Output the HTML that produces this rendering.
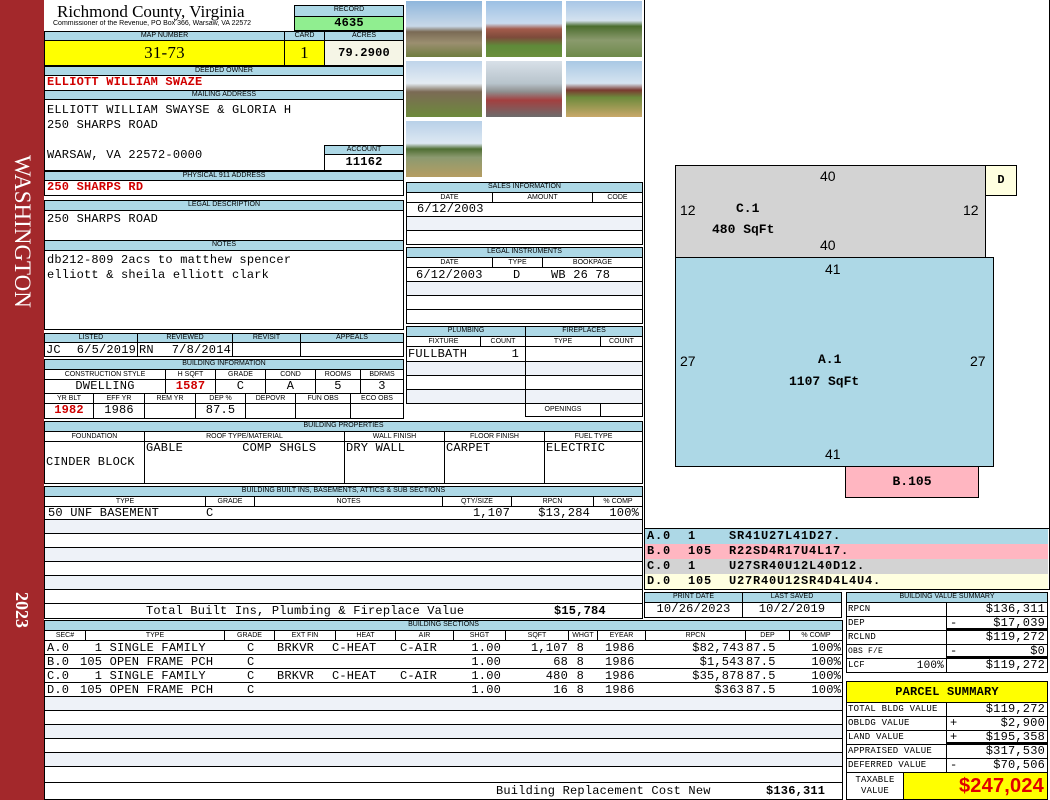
<!DOCTYPE html>
<html><head><meta charset="utf-8"><style>
*{margin:0;padding:0;box-sizing:border-box}
body{width:1050px;height:800px;position:relative;background:#fff;overflow:hidden;font-family:"Liberation Mono",monospace;font-size:12px;color:#000}
.a{position:absolute;overflow:hidden;white-space:nowrap}
.h{position:absolute;background:#add8e6;border:1px solid #000;font:7px/8px "Liberation Sans",sans-serif;text-align:center;overflow:hidden;white-space:nowrap}
.c{position:absolute;border:1px solid #000;font:7px/9px "Liberation Sans",sans-serif;text-align:center;background:#fff;overflow:hidden;white-space:nowrap}
.b{position:absolute;border:1px solid #000;background:#fff;overflow:hidden;white-space:nowrap;font-size:12px;letter-spacing:.2px;line-height:13px}
.t{position:absolute;font-size:12px;letter-spacing:.2px;line-height:14px;white-space:pre}
.R{text-align:right}
.r{color:#d00000;font-weight:bold}
.alt{background:#eef2f8}
.ph{position:absolute;width:78px;height:58px;border:1px solid #fff}
.k{position:absolute;font:bold 12px/15px "Liberation Mono",monospace;letter-spacing:.8px;white-space:pre}
</style></head><body>
<div class="a" style="left:0;top:0;width:44px;height:800px;background:#a3282b"></div>
<div class="a" style="left:6px;top:155px;width:32px;height:175px;color:#fff;font:23px 'Liberation Serif',serif;writing-mode:vertical-rl;line-height:32px">WASHINGTON</div>
<div class="a" style="left:8px;top:592px;width:28px;height:40px;color:#fff;font:bold 18px 'Liberation Serif',serif;writing-mode:vertical-rl;line-height:28px">2023</div>

<div class="a" style="left:57px;top:2px;font:17px/19px 'Liberation Serif',serif">Richmond County, Virginia</div>
<div class="a" style="left:53px;top:20px;font:7px/8px 'Liberation Sans',sans-serif">Commissioner of the Revenue, PO Box 366, Warsaw, VA 22572</div>
<div class="h" style="left:294px;top:5px;width:110px;height:12px">RECORD</div>
<div class="b" style="left:294px;top:16px;width:110px;height:15px;background:#90ee90;text-align:center;font-weight:bold;line-height:13px">4635</div>

<div class="h" style="left:44px;top:31px;width:241px;height:10px">MAP NUMBER</div>
<div class="h" style="left:284px;top:31px;width:41px;height:10px">CARD</div>
<div class="h" style="left:324px;top:31px;width:80px;height:10px">ACRES</div>
<div class="b" style="left:44px;top:40px;width:241px;height:26px;background:#ffff00;text-align:center;font:17px/24px 'Liberation Serif',serif">31-73</div>
<div class="b" style="left:284px;top:40px;width:41px;height:26px;background:#ffff00;text-align:center;font:17px/24px 'Liberation Serif',serif">1</div>
<div class="b" style="left:324px;top:40px;width:80px;height:26px;background:#f5f5e6;text-align:center;font-weight:bold;line-height:24px">79.2900</div>

<div class="h" style="left:44px;top:66px;width:360px;height:10px">DEEDED OWNER</div>
<div class="b r" style="left:44px;top:75px;width:360px;height:16px;padding-left:2px">ELLIOTT WILLIAM SWAZE</div>
<div class="h" style="left:44px;top:90px;width:360px;height:10px">MAILING ADDRESS</div>
<div class="b" style="left:44px;top:99px;width:360px;height:72px;padding:3px 2px;line-height:15px;white-space:pre">ELLIOTT WILLIAM SWAYSE &amp; GLORIA H
250 SHARPS ROAD

WARSAW, VA 22572-0000</div>
<div class="h" style="left:324px;top:145px;width:80px;height:10px">ACCOUNT</div>
<div class="b" style="left:324px;top:154px;width:80px;height:17px;text-align:center;font-weight:bold;line-height:15px">11162</div>
<div class="h" style="left:44px;top:171px;width:360px;height:10px">PHYSICAL 911 ADDRESS</div>
<div class="b r" style="left:44px;top:180px;width:360px;height:16px;padding-left:2px">250 SHARPS RD</div>

<div class="h" style="left:44px;top:200px;width:360px;height:11px">LEGAL DESCRIPTION</div>
<div class="b" style="left:44px;top:210px;width:360px;height:31px;padding:2px">250 SHARPS ROAD</div>
<div class="h" style="left:44px;top:240px;width:360px;height:11px">NOTES</div>
<div class="b" style="left:44px;top:250px;width:360px;height:80px;padding:2px;line-height:15px;white-space:pre">db212-809 2acs to matthew spencer
elliott &amp; sheila elliott clark</div>

<div class="h" style="left:44px;top:333px;width:94px;height:10px">LISTED</div>
<div class="h" style="left:137px;top:333px;width:96px;height:10px">REVIEWED</div>
<div class="h" style="left:232px;top:333px;width:69px;height:10px">REVISIT</div>
<div class="h" style="left:300px;top:333px;width:104px;height:10px">APPEALS</div>
<div class="b" style="left:44px;top:342px;width:94px;height:15px"></div>
<div class="b" style="left:137px;top:342px;width:96px;height:15px"></div>
<div class="b" style="left:232px;top:342px;width:69px;height:15px"></div>
<div class="b" style="left:300px;top:342px;width:104px;height:15px"></div>
<div class="t" style="left:46px;top:343px">JC</div>
<div class="t R" style="left:60px;top:343px;width:76px">6/5/2019</div>
<div class="t" style="left:139px;top:343px">RN</div>
<div class="t R" style="left:150px;top:343px;width:81px">7/8/2014</div>

<div class="h" style="left:44px;top:359px;width:360px;height:11px">BUILDING INFORMATION</div>
<div class="c" style="left:44px;top:369px;width:122px;height:11px">CONSTRUCTION STYLE</div>
<div class="c" style="left:165px;top:369px;width:51px;height:11px">H SQFT</div>
<div class="c" style="left:215px;top:369px;width:51px;height:11px">GRADE</div>
<div class="c" style="left:265px;top:369px;width:51px;height:11px">COND</div>
<div class="c" style="left:315px;top:369px;width:46px;height:11px">ROOMS</div>
<div class="c" style="left:360px;top:369px;width:44px;height:11px">BDRMS</div>
<div class="b" style="left:44px;top:379px;width:122px;height:15px;text-align:center">DWELLING</div>
<div class="b r" style="left:165px;top:379px;width:51px;height:15px;text-align:center">1587</div>
<div class="b" style="left:215px;top:379px;width:51px;height:15px;text-align:center">C</div>
<div class="b" style="left:265px;top:379px;width:51px;height:15px;text-align:center">A</div>
<div class="b" style="left:315px;top:379px;width:46px;height:15px;text-align:center">5</div>
<div class="b" style="left:360px;top:379px;width:44px;height:15px;text-align:center">3</div>
<div class="c" style="left:44px;top:393px;width:50px;height:11px">YR BLT</div>
<div class="c" style="left:93px;top:393px;width:52px;height:11px">EFF YR</div>
<div class="c" style="left:144px;top:393px;width:52px;height:11px">REM YR</div>
<div class="c" style="left:195px;top:393px;width:51px;height:11px">DEP %</div>
<div class="c" style="left:245px;top:393px;width:51px;height:11px">DEPOVR</div>
<div class="c" style="left:295px;top:393px;width:56px;height:11px">FUN OBS</div>
<div class="c" style="left:350px;top:393px;width:54px;height:11px">ECO OBS</div>
<div class="b r" style="left:44px;top:403px;width:50px;height:16px;text-align:center">1982</div>
<div class="b" style="left:93px;top:403px;width:52px;height:16px;text-align:center">1986</div>
<div class="b" style="left:144px;top:403px;width:52px;height:16px"></div>
<div class="b" style="left:195px;top:403px;width:51px;height:16px;text-align:center">87.5</div>
<div class="b" style="left:245px;top:403px;width:51px;height:16px"></div>
<div class="b" style="left:295px;top:403px;width:56px;height:16px"></div>
<div class="b" style="left:350px;top:403px;width:54px;height:16px"></div>

<div class="ph" style="left:405px;top:0;background:linear-gradient(#8fb6dc 0,#c8d8e8 45%,#7a6a55 55%,#9b8f70 75%,#6f7d3f 100%)"></div>
<div class="ph" style="left:485px;top:0;background:linear-gradient(#9cc0e4 0,#c9dbee 40%,#a35b4b 50%,#7d4b3b 65%,#5f8a3a 80%,#6b8f3c 100%)"></div>
<div class="ph" style="left:565px;top:0;background:linear-gradient(#a8c6e6 0,#d4e2ef 35%,#4b6d2e 45%,#8a9a6d 70%,#6e8a4a 100%)"></div>
<div class="ph" style="left:405px;top:60px;background:linear-gradient(#bfd4ea 0,#e4ecf3 40%,#7b6a55 55%,#6d8a3c 100%)"></div>
<div class="ph" style="left:485px;top:60px;background:linear-gradient(#d8e0e8 0,#b8c4cc 40%,#8f8f8f 55%,#a34040 70%,#6c6c6c 100%)"></div>
<div class="ph" style="left:565px;top:60px;background:linear-gradient(#a9c8e4 0,#d6e4f0 40%,#7a3a30 52%,#6d8a3c 65%,#c9a86a 100%)"></div>
<div class="ph" style="left:405px;top:120px;background:linear-gradient(#b8d0e8 0,#dde8f2 40%,#4f6e33 50%,#8c9a70 65%,#b59d62 100%)"></div>

<div class="h" style="left:406px;top:182px;width:237px;height:11px">SALES INFORMATION</div>
<div class="c" style="left:406px;top:192px;width:87px;height:11px">DATE</div>
<div class="c" style="left:492px;top:192px;width:101px;height:11px">AMOUNT</div>
<div class="c" style="left:592px;top:192px;width:51px;height:11px">CODE</div>
<div class="b" style="left:406px;top:202px;width:237px;height:15px;padding-left:10px">6/12/2003</div>
<div class="b alt" style="left:406px;top:216px;width:237px;height:15px"></div>
<div class="b" style="left:406px;top:230px;width:237px;height:15px"></div>

<div class="h" style="left:406px;top:247px;width:237px;height:11px">LEGAL INSTRUMENTS</div>
<div class="c" style="left:406px;top:257px;width:87px;height:11px">DATE</div>
<div class="c" style="left:492px;top:257px;width:51px;height:11px">TYPE</div>
<div class="c" style="left:542px;top:257px;width:101px;height:11px">BOOKPAGE</div>
<div class="b" style="left:406px;top:267px;width:237px;height:15px"></div>
<div class="t" style="left:416px;top:268px">6/12/2003</div>
<div class="t" style="left:513px;top:268px">D</div>
<div class="t" style="left:551px;top:268px">WB 26 78</div>
<div class="b alt" style="left:406px;top:281px;width:237px;height:15px"></div>
<div class="b" style="left:406px;top:295px;width:237px;height:15px"></div>
<div class="b" style="left:406px;top:309px;width:237px;height:15px"></div>

<div class="h" style="left:406px;top:326px;width:120px;height:11px">PLUMBING</div>
<div class="h" style="left:525px;top:326px;width:118px;height:11px">FIREPLACES</div>
<div class="c" style="left:406px;top:336px;width:75px;height:11px">FIXTURE</div>
<div class="c" style="left:480px;top:336px;width:46px;height:11px">COUNT</div>
<div class="c" style="left:525px;top:336px;width:76px;height:11px">TYPE</div>
<div class="c" style="left:600px;top:336px;width:43px;height:11px">COUNT</div>
<div class="b" style="left:406px;top:346px;width:120px;height:16px"></div>
<div class="t" style="left:408px;top:347px">FULLBATH</div>
<div class="t R" style="left:480px;top:347px;width:39px">1</div>
<div class="b alt" style="left:406px;top:361px;width:120px;height:15px"></div>
<div class="b" style="left:406px;top:375px;width:120px;height:15px"></div>
<div class="b alt" style="left:406px;top:389px;width:120px;height:15px"></div>
<div class="b" style="left:525px;top:346px;width:118px;height:16px"></div>
<div class="b alt" style="left:525px;top:361px;width:118px;height:15px"></div>
<div class="b" style="left:525px;top:375px;width:118px;height:15px"></div>
<div class="b alt" style="left:525px;top:389px;width:118px;height:15px"></div>
<div class="c" style="left:525px;top:403px;width:76px;height:14px;line-height:12px">OPENINGS</div>
<div class="b" style="left:600px;top:403px;width:43px;height:14px"></div>

<div class="h" style="left:44px;top:421px;width:599px;height:11px">BUILDING PROPERTIES</div>
<div class="c" style="left:44px;top:431px;width:101px;height:11px">FOUNDATION</div>
<div class="c" style="left:144px;top:431px;width:201px;height:11px">ROOF TYPE/MATERIAL</div>
<div class="c" style="left:344px;top:431px;width:101px;height:11px">WALL FINISH</div>
<div class="c" style="left:444px;top:431px;width:101px;height:11px">FLOOR FINISH</div>
<div class="c" style="left:544px;top:431px;width:99px;height:11px">FUEL TYPE</div>
<div class="b" style="left:44px;top:441px;width:101px;height:43px;padding:14px 1px 0">CINDER BLOCK</div>
<div class="b" style="left:144px;top:441px;width:201px;height:43px;padding:0 1px;white-space:pre">GABLE        COMP SHGLS</div>
<div class="b" style="left:344px;top:441px;width:101px;height:43px;padding:0 1px">DRY WALL</div>
<div class="b" style="left:444px;top:441px;width:101px;height:43px;padding:0 1px">CARPET</div>
<div class="b" style="left:544px;top:441px;width:99px;height:43px;padding:0 1px">ELECTRIC</div>

<div class="h" style="left:44px;top:486px;width:599px;height:11px">BUILDING BUILT INS, BASEMENTS, ATTICS &amp; SUB SECTIONS</div>
<div class="c" style="left:44px;top:496px;width:162px;height:11px">TYPE</div>
<div class="c" style="left:205px;top:496px;width:50px;height:11px">GRADE</div>
<div class="c" style="left:254px;top:496px;width:189px;height:11px">NOTES</div>
<div class="c" style="left:442px;top:496px;width:70px;height:11px">QTY/SIZE</div>
<div class="c" style="left:511px;top:496px;width:83px;height:11px">RPCN</div>
<div class="c" style="left:593px;top:496px;width:50px;height:11px">% COMP</div>
<div class="b" style="left:44px;top:506px;width:599px;height:14px"></div>
<div class="t" style="left:48px;top:506px">50 UNF BASEMENT</div>
<div class="t" style="left:206px;top:506px">C</div>
<div class="t R" style="left:440px;top:506px;width:70px">1,107</div>
<div class="t R" style="left:510px;top:506px;width:80px">$13,284</div>
<div class="t R" style="left:590px;top:506px;width:49px">100%</div>
<div class="b alt" style="left:44px;top:519px;width:599px;height:15px"></div>
<div class="b" style="left:44px;top:533px;width:599px;height:15px"></div>
<div class="b alt" style="left:44px;top:547px;width:599px;height:15px"></div>
<div class="b" style="left:44px;top:561px;width:599px;height:15px"></div>
<div class="b alt" style="left:44px;top:575px;width:599px;height:15px"></div>
<div class="b" style="left:44px;top:589px;width:599px;height:15px"></div>
<div class="b" style="left:44px;top:603px;width:599px;height:16px"></div>
<div class="t" style="left:146px;top:604px">Total Built Ins, Plumbing &amp; Fireplace Value</div>
<div class="t" style="left:554px;top:604px;font-weight:bold">$15,784</div>

<div class="h" style="left:644px;top:592px;width:99px;height:11px">PRINT DATE</div>
<div class="h" style="left:742px;top:592px;width:100px;height:11px">LAST SAVED</div>
<div class="b" style="left:644px;top:602px;width:99px;height:16px;text-align:center">10/26/2023</div>
<div class="b" style="left:742px;top:602px;width:100px;height:16px;text-align:center">10/2/2019</div>

<div class="h" style="left:44px;top:620px;width:799px;height:11px">BUILDING SECTIONS</div>
<div class="c" style="left:44px;top:630px;width:42px;height:11px">SEC#</div>
<div class="c" style="left:85px;top:630px;width:140px;height:11px">TYPE</div>
<div class="c" style="left:224px;top:630px;width:51px;height:11px">GRADE</div>
<div class="c" style="left:274px;top:630px;width:62px;height:11px">EXT FIN</div>
<div class="c" style="left:335px;top:630px;width:61px;height:11px">HEAT</div>
<div class="c" style="left:395px;top:630px;width:59px;height:11px">AIR</div>
<div class="c" style="left:453px;top:630px;width:53px;height:11px">SHGT</div>
<div class="c" style="left:505px;top:630px;width:64px;height:11px">SQFT</div>
<div class="c" style="left:568px;top:630px;width:30px;height:11px">WHGT</div>
<div class="c" style="left:597px;top:630px;width:49px;height:11px">EYEAR</div>
<div class="c" style="left:645px;top:630px;width:101px;height:11px">RPCN</div>
<div class="c" style="left:745px;top:630px;width:45px;height:11px">DEP</div>
<div class="c" style="left:789px;top:630px;width:54px;height:11px">% COMP</div>
<div class="b" style="left:44px;top:640px;width:799px;height:15px"></div>
<div class="b" style="left:44px;top:654px;width:799px;height:15px"></div>
<div class="b" style="left:44px;top:668px;width:799px;height:15px"></div>
<div class="b" style="left:44px;top:682px;width:799px;height:15px"></div>

<div class="t" style="left:47px;top:641px">A.0</div><div class="t" style="left:80px;top:641px">  1 SINGLE FAMILY</div><div class="t" style="left:247px;top:641px">C</div><div class="t" style="left:277px;top:641px">BRKVR</div><div class="t" style="left:332px;top:641px">C-HEAT</div><div class="t" style="left:400px;top:641px">C-AIR</div><div class="t R" style="left:450px;top:641px;width:51px">1.00</div><div class="t R" style="left:510px;top:641px;width:58px">1,107</div><div class="t R" style="left:570px;top:641px;width:14px">8</div><div class="t" style="left:605px;top:641px">1986</div><div class="t R" style="left:650px;top:641px;width:94px">$82,743</div><div class="t" style="left:746px;top:641px">87.5</div><div class="t R" style="left:790px;top:641px;width:51px">100%</div>

<div class="t" style="left:47px;top:655px">B.0</div><div class="t" style="left:80px;top:655px">105 OPEN FRAME PCH</div><div class="t" style="left:247px;top:655px">C</div><div class="t R" style="left:450px;top:655px;width:51px">1.00</div><div class="t R" style="left:510px;top:655px;width:58px">68</div><div class="t R" style="left:570px;top:655px;width:14px">8</div><div class="t" style="left:605px;top:655px">1986</div><div class="t R" style="left:650px;top:655px;width:94px">$1,543</div><div class="t" style="left:746px;top:655px">87.5</div><div class="t R" style="left:790px;top:655px;width:51px">100%</div>

<div class="t" style="left:47px;top:669px">C.0</div><div class="t" style="left:80px;top:669px">  1 SINGLE FAMILY</div><div class="t" style="left:247px;top:669px">C</div><div class="t" style="left:277px;top:669px">BRKVR</div><div class="t" style="left:332px;top:669px">C-HEAT</div><div class="t" style="left:400px;top:669px">C-AIR</div><div class="t R" style="left:450px;top:669px;width:51px">1.00</div><div class="t R" style="left:510px;top:669px;width:58px">480</div><div class="t R" style="left:570px;top:669px;width:14px">8</div><div class="t" style="left:605px;top:669px">1986</div><div class="t R" style="left:650px;top:669px;width:94px">$35,878</div><div class="t" style="left:746px;top:669px">87.5</div><div class="t R" style="left:790px;top:669px;width:51px">100%</div>

<div class="t" style="left:47px;top:683px">D.0</div><div class="t" style="left:80px;top:683px">105 OPEN FRAME PCH</div><div class="t" style="left:247px;top:683px">C</div><div class="t R" style="left:450px;top:683px;width:51px">1.00</div><div class="t R" style="left:510px;top:683px;width:58px">16</div><div class="t R" style="left:570px;top:683px;width:14px">8</div><div class="t" style="left:605px;top:683px">1986</div><div class="t R" style="left:650px;top:683px;width:94px">$363</div><div class="t" style="left:746px;top:683px">87.5</div><div class="t R" style="left:790px;top:683px;width:51px">100%</div>

<div class="b alt" style="left:44px;top:696px;width:799px;height:15px"></div>
<div class="b" style="left:44px;top:710px;width:799px;height:15px"></div>
<div class="b alt" style="left:44px;top:724px;width:799px;height:15px"></div>
<div class="b" style="left:44px;top:738px;width:799px;height:15px"></div>
<div class="b alt" style="left:44px;top:752px;width:799px;height:15px"></div>
<div class="b" style="left:44px;top:766px;width:799px;height:17px"></div>
<div class="b" style="left:44px;top:782px;width:799px;height:18px"></div>
<div class="t" style="left:496px;top:784px">Building Replacement Cost New</div>
<div class="t" style="left:766px;top:784px;font-weight:bold">$136,311</div>

<div class="a" style="left:644px;top:0;width:406px;height:528px;border-left:1px solid #000;border-right:1px solid #000"></div>
<div class="a" style="left:675px;top:165px;width:311px;height:93px;background:#d3d3d3;border:1px solid #000"></div>
<div class="a" style="left:985px;top:165px;width:32px;height:31px;background:#ffffe0;border:1px solid #000;text-align:center;font:bold 12px/28px 'Liberation Mono',monospace">D</div>
<div class="a" style="left:675px;top:257px;width:319px;height:210px;background:#add8e6;border:1px solid #000"></div>
<div class="a" style="left:845px;top:466px;width:134px;height:32px;background:#ffb6c1;border:1px solid #000;text-align:center;font:bold 13px/30px 'Liberation Mono',monospace">B.105</div>
<div class="a" style="left:820px;top:168px;font:14px 'Liberation Sans',sans-serif">40</div>
<div class="a" style="left:820px;top:237px;font:14px 'Liberation Sans',sans-serif">40</div>
<div class="a" style="left:680px;top:202px;font:14px 'Liberation Sans',sans-serif">12</div>
<div class="a" style="left:963px;top:202px;font:14px 'Liberation Sans',sans-serif">12</div>
<div class="a" style="left:736px;top:201px;font:bold 13px 'Liberation Mono',monospace">C.1</div>
<div class="a" style="left:712px;top:222px;font:bold 13px 'Liberation Mono',monospace">480 SqFt</div>
<div class="a" style="left:825px;top:261px;font:14px 'Liberation Sans',sans-serif">41</div>
<div class="a" style="left:825px;top:446px;font:14px 'Liberation Sans',sans-serif">41</div>
<div class="a" style="left:680px;top:353px;font:14px 'Liberation Sans',sans-serif">27</div>
<div class="a" style="left:970px;top:353px;font:14px 'Liberation Sans',sans-serif">27</div>
<div class="a" style="left:818px;top:352px;font:bold 13px 'Liberation Mono',monospace">A.1</div>
<div class="a" style="left:789px;top:374px;font:bold 13px 'Liberation Mono',monospace">1107 SqFt</div>

<div class="a" style="left:644px;top:528px;width:406px;height:62px;border:1px solid #000"></div>
<div class="a" style="left:645px;top:529px;width:403px;height:15px;background:#add8e6"></div>
<div class="a" style="left:645px;top:544px;width:403px;height:15px;background:#ffb6c1"></div>
<div class="a" style="left:645px;top:559px;width:403px;height:15px;background:#d3d3d3"></div>
<div class="a" style="left:645px;top:574px;width:403px;height:15px;background:#ffffe0"></div>
<div class="k" style="left:647px;top:529px">A.0</div><div class="k" style="left:688px;top:529px">1</div><div class="k" style="left:729px;top:529px">SR41U27L41D27.</div>
<div class="k" style="left:647px;top:544px">B.0</div><div class="k" style="left:688px;top:544px">105</div><div class="k" style="left:729px;top:544px">R22SD4R17U4L17.</div>
<div class="k" style="left:647px;top:559px">C.0</div><div class="k" style="left:688px;top:559px">1</div><div class="k" style="left:729px;top:559px">U27SR40U12L40D12.</div>
<div class="k" style="left:647px;top:574px">D.0</div><div class="k" style="left:688px;top:574px">105</div><div class="k" style="left:729px;top:574px">U27R40U12SR4D4L4U4.</div>

<div class="h" style="left:846px;top:592px;width:202px;height:11px">BUILDING VALUE SUMMARY</div>
<div class="b" style="left:846px;top:602px;width:101px;height:15px;font-size:9px;padding-left:1px">RPCN</div>
<div class="b" style="left:946px;top:602px;width:102px;height:15px;text-align:right;padding-right:2px">$136,311</div>
<div class="b" style="left:846px;top:616px;width:101px;height:15px;font-size:9px;padding-left:1px">DEP</div>
<div class="b" style="left:946px;top:616px;width:102px;height:15px;text-align:right;padding-right:2px;border-bottom:3px solid #000">$17,039</div>
<div class="t" style="left:950px;top:616px">-</div>
<div class="b" style="left:846px;top:630px;width:101px;height:15px;font-size:9px;padding-left:1px">RCLND</div>
<div class="b" style="left:946px;top:630px;width:102px;height:15px;text-align:right;padding-right:2px">$119,272</div>
<div class="b" style="left:846px;top:644px;width:101px;height:15px;font-size:8px;padding-left:1px">OBS F/E</div>
<div class="b" style="left:946px;top:644px;width:102px;height:15px;text-align:right;padding-right:2px;border-bottom:3px solid #000">$0</div>
<div class="t" style="left:950px;top:644px">-</div>
<div class="b" style="left:846px;top:658px;width:101px;height:15px;font-size:9px;padding-left:1px">LCF</div>
<div class="t R" style="left:880px;top:659px;width:64px;font-size:11px">100%</div>
<div class="b" style="left:946px;top:658px;width:102px;height:15px;text-align:right;padding-right:2px">$119,272</div>

<div class="b" style="left:846px;top:681px;width:202px;height:22px;background:#ffff00;text-align:center;font:bold 12px/20px 'Liberation Mono',monospace">PARCEL SUMMARY</div>
<div class="b" style="left:846px;top:702px;width:101px;height:15px;font-size:9px;padding-left:1px">TOTAL BLDG VALUE</div>
<div class="b" style="left:946px;top:702px;width:102px;height:15px;text-align:right;padding-right:2px">$119,272</div>
<div class="b" style="left:846px;top:716px;width:101px;height:15px;font-size:9px;padding-left:1px">OBLDG VALUE</div>
<div class="b" style="left:946px;top:716px;width:102px;height:15px;text-align:right;padding-right:2px">$2,900</div>
<div class="t" style="left:950px;top:716px">+</div>
<div class="b" style="left:846px;top:730px;width:101px;height:15px;font-size:9px;padding-left:1px">LAND VALUE</div>
<div class="b" style="left:946px;top:730px;width:102px;height:15px;text-align:right;padding-right:2px;border-bottom:3px solid #000">$195,358</div>
<div class="t" style="left:950px;top:730px">+</div>
<div class="b" style="left:846px;top:744px;width:101px;height:15px;font-size:9px;padding-left:1px">APPRAISED VALUE</div>
<div class="b" style="left:946px;top:744px;width:102px;height:15px;text-align:right;padding-right:2px">$317,530</div>
<div class="b" style="left:846px;top:758px;width:101px;height:15px;font-size:9px;padding-left:1px">DEFERRED VALUE</div>
<div class="b" style="left:946px;top:758px;width:102px;height:15px;text-align:right;padding-right:2px">$70,506</div>
<div class="t" style="left:950px;top:758px">-</div>
<div class="b" style="left:846px;top:772px;width:58px;height:28px;font-size:9px;line-height:11px;text-align:center;padding-top:2px;white-space:pre-line">TAXABLE
VALUE</div>
<div class="b" style="left:903px;top:772px;width:145px;height:28px;background:#ffff00;color:#e00000;text-align:right;padding-right:3px;font:bold 20px/26px 'Liberation Sans',sans-serif">$247,024</div>
</body></html>
